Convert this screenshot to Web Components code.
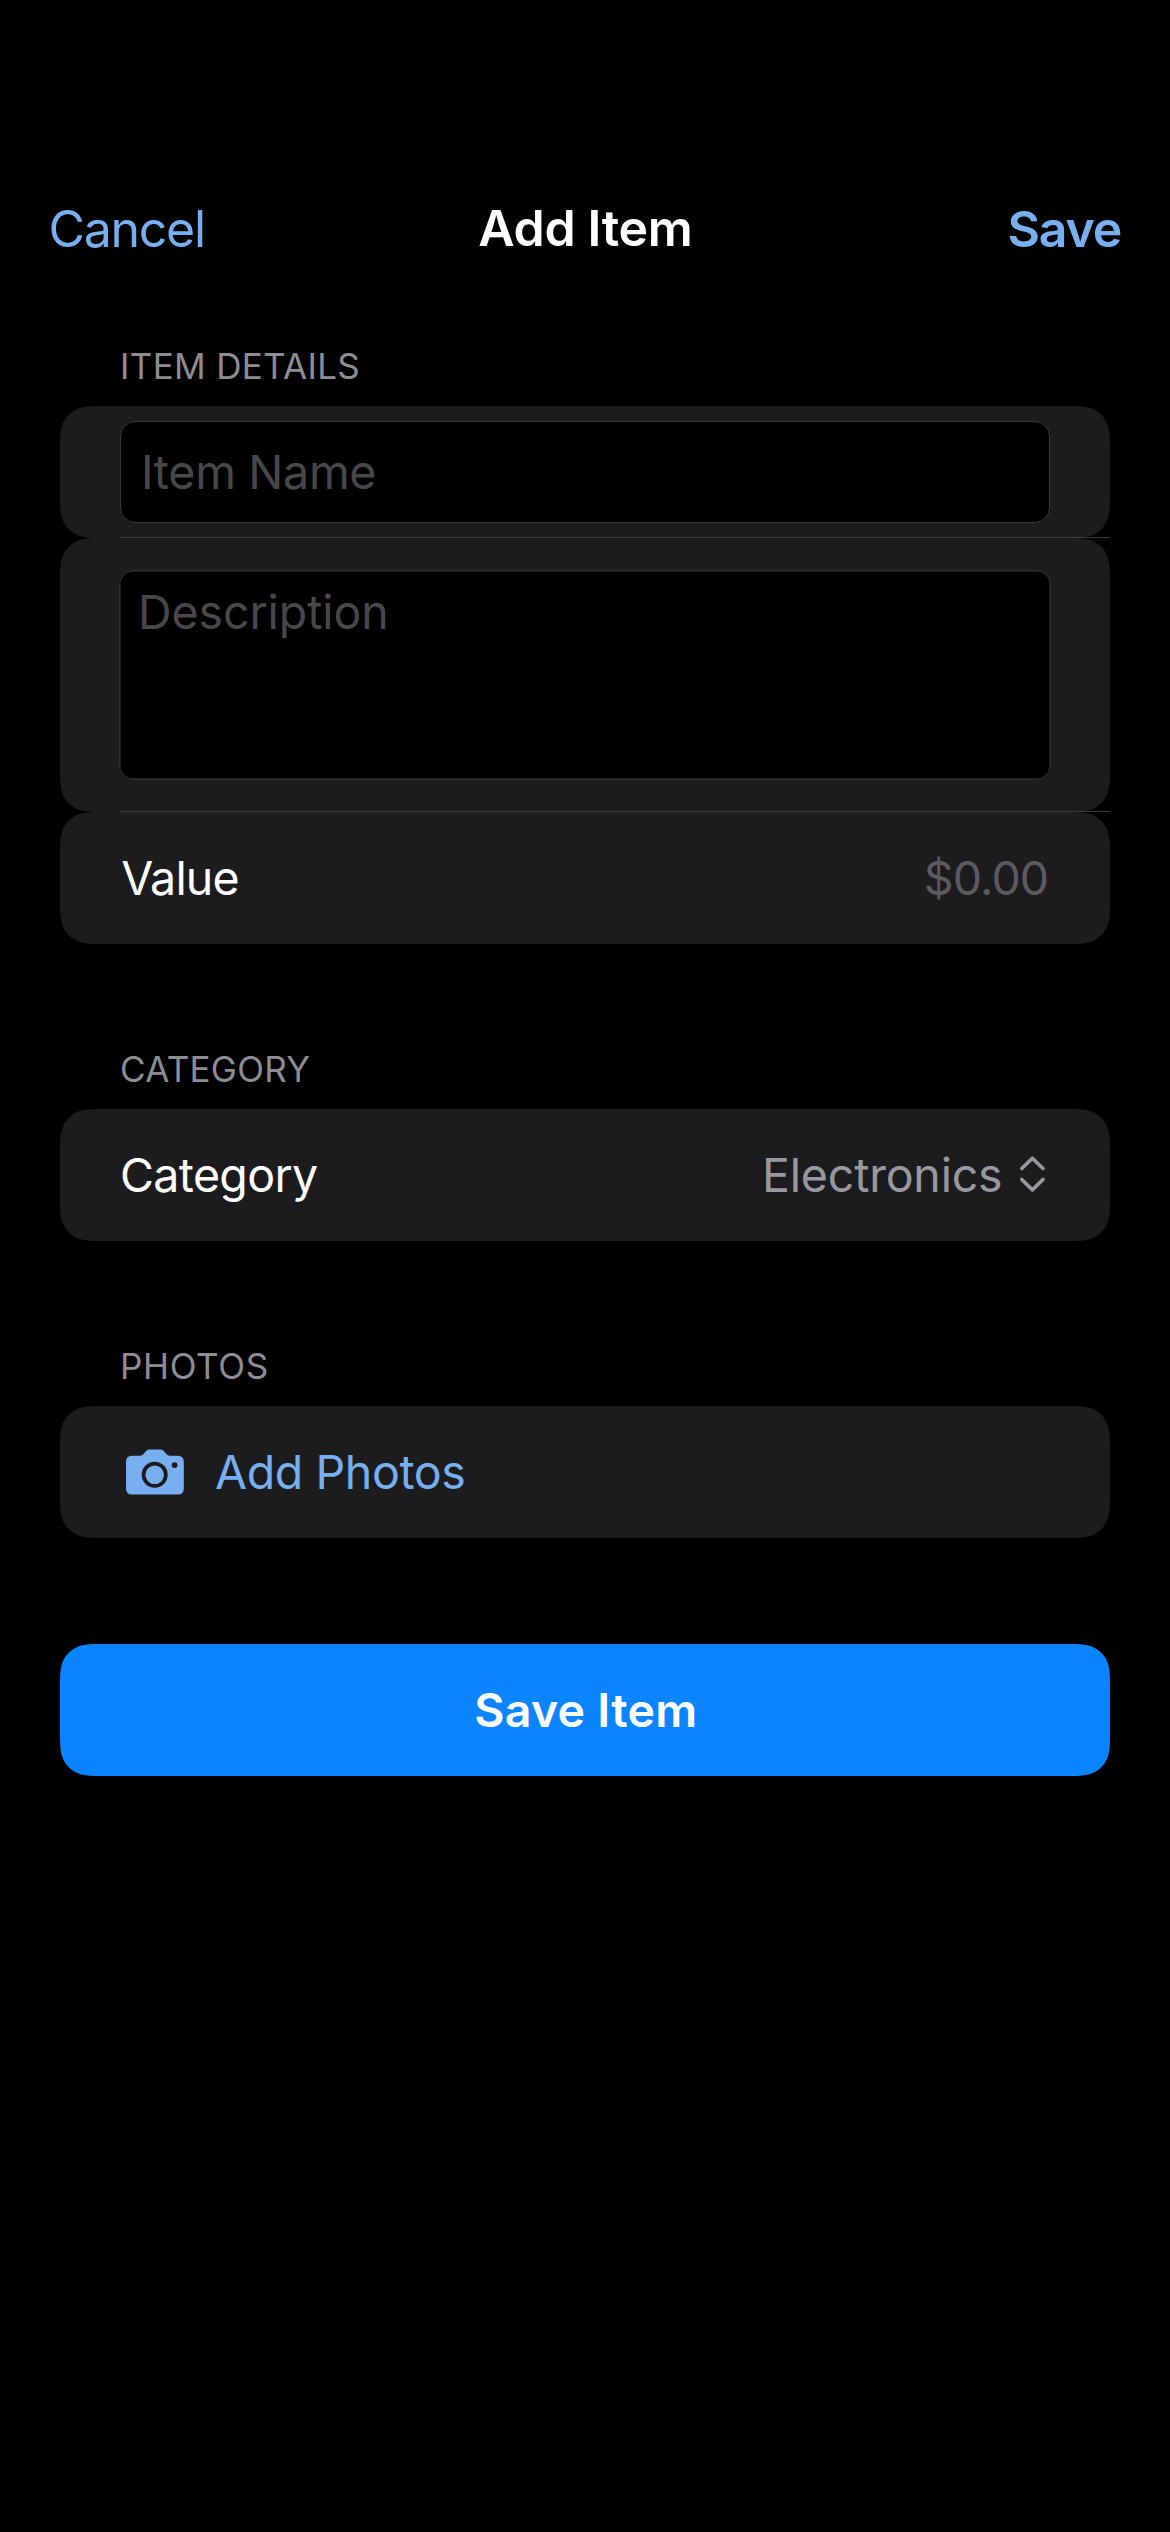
<!DOCTYPE html>
<html lang="en">
<head>
<meta charset="utf-8">
<title>Add Item</title>
<style>
html, body { margin: 0; background: #000; }
body { font-family: Inter, "Liberation Sans", sans-serif; color: #fff; }
</style>
</head>
<body>
<add-item-screen></add-item-screen>

<script>
const define = (name, html, setup) => {
  const template = document.createElement('template');
  template.innerHTML = html;
  customElements.define(name, class extends HTMLElement {
    connectedCallback() {
      if (this.shadowRoot) return;
      this.attachShadow({ mode: 'open' }).append(template.content.cloneNode(true));
      if (setup) setup(this, this.shadowRoot);
    }
  });
};

// Outline of a rectangle whose corners ease into the sides (continuous corners).
function continuousRect(w, h, r) {
  const a = 1.528665 * r, b = 1.088493 * r, c = 0.868407 * r, d = 0.631494 * r,
        e = 0.372824 * r, f = 0.16906 * r, g = 0.074911 * r;
  return `M${a} 0 H${w - a} C${w - b} 0 ${w - c} 0 ${w - d} ${g} C${w - e} ${f} ${w - f} ${e} ${w - g} ${d} C${w} ${c} ${w} ${b} ${w} ${a}
    V${h - a} C${w} ${h - b} ${w} ${h - c} ${w - g} ${h - d} C${w - f} ${h - e} ${w - e} ${h - f} ${w - d} ${h - g} C${w - c} ${h} ${w - b} ${h} ${w - a} ${h}
    H${a} C${b} ${h} ${c} ${h} ${d} ${h - g} C${e} ${h - f} ${f} ${h - e} ${g} ${h - d} C0 ${h - c} 0 ${h - b} 0 ${h - a}
    V${a} C0 ${b} 0 ${c} ${g} ${d} C${f} ${e} ${e} ${f} ${d} ${g} C${c} 0 ${b} 0 ${a} 0 Z`;
}

define('nav-bar', `
<style>
:host { display: grid; grid-template-columns: 1fr auto 1fr; align-items: center; height: 138px; padding: 160px 48.8px 0 48.6px;
  font-size: 50px; line-height: 60px; white-space: nowrap; }
.back, .done { color: #77aff0; }
.back { letter-spacing: -1.31px; }
.title { font-weight: 600; letter-spacing: -.35px; padding: 0 0 2px 1px; }
.done { font-weight: 600; letter-spacing: -1.17px; justify-self: end; }
</style>
<span class="back"><slot name="back"></slot></span>
<span class="title"><slot></slot></span>
<span class="done"><slot name="done"></slot></span>`);

define('form-section', `
<style>
:host { display: block; padding: 0 60px; }
header { box-sizing: border-box; height: 62px; padding-left: 60px; font-size: 35px; line-height: 44px; color: #8d8d93;
  letter-spacing: var(--label-spacing, .33px); }
.rows { display: flex; flex-direction: column; }
</style>
<header><slot name="label"></slot></header>
<div class="rows"><slot></slot></div>`);

define('form-row', `
<style>
:host { display: block; position: relative; }
.card { box-sizing: border-box; min-height: 132px; display: flex; align-items: center; justify-content: space-between;
  padding: var(--row-pad, 0 60px); background: var(--row-fill, #1c1c1e); border-radius: 30px;
  font-size: 46.5px; line-height: 56px; white-space: nowrap; }
:host([separator])::after { content: ""; position: absolute; left: 60px; right: 0; bottom: 0; height: 1px; background: #3a3a3c; }
</style>
<div class="card"><slot></slot></div>`, (host, root) => {
  const card = root.querySelector('.card');
  new ResizeObserver(() => {
    card.style.borderRadius = '0';
    card.style.clipPath = `path("${continuousRect(card.offsetWidth, card.offsetHeight, 30).replace(/\s+/g, ' ')}")`;
  }).observe(card);
});

define('text-field', `
<style>
:host { display: flex; align-items: center; box-sizing: border-box; width: 100%; height: 102px; padding: 0 20px;
  border: 1px solid #38383a; border-radius: 15px; background: #000; color: #48484a; letter-spacing: -.3px; }
</style>
<slot></slot>`);

define('text-area', `
<style>
:host { display: block; box-sizing: border-box; flex: 1; height: 210px; padding: 13px 18px; border: 1px solid #2e2e30;
  box-shadow: inset 0 0 0 1px #1c1c1d; border-radius: 14px; background: #000; color: #48484a; letter-spacing: -.08px; }
</style>
<slot></slot>`);

define('row-label', `
<style>:host { display: block; color: #fff; }</style>
<slot></slot>`);

define('amount-input', `
<style>:host { display: block; color: #5b5b5f; letter-spacing: -.88px; padding-right: 1.7px; }</style>
<slot></slot>`);

define('picker-value', `
<style>
:host { display: flex; align-items: center; gap: 15.6px; color: #98989f; letter-spacing: -.2px; }
svg { display: block; }
</style>
<slot></slot>
<svg width="32" height="40" viewBox="0 0 32 40" fill="none" stroke="currentColor" stroke-width="3.6" stroke-linecap="round" stroke-linejoin="round">
  <path d="M3.8 13.5 14.4 3.2 25 13.5M3.8 24.5 14.4 34.9 25 24.5"/>
</svg>`);

define('photo-button', `
<style>
:host { display: flex; align-items: center; gap: 31px; color: #77aff0; letter-spacing: -.39px; padding-left: 6px; }
svg { display: block; }
</style>
<svg width="58" height="46" viewBox="0 0 58 46" fill="currentColor" fill-rule="evenodd">
  <path d="M6 6.7H14C16 6.7 17 5.6 18.4 4L20 2.3C21.4 .8 22.6.6 24.5.6H33.5C35.4.6 36.6.8 38 2.3L39.6 4C41 5.6 42 6.7 44 6.7H51.8Q57.8 6.7 57.8 12.7V39.4Q57.8 45.4 51.8 45.4H6Q0 45.4 0 39.4V12.7Q0 6.7 6 6.7Z
    M28.7 12.8A13 13 0 1 0 28.7 38.8A13 13 0 1 0 28.7 12.8Z
    M48.6 13.2A2.9 2.9 0 1 0 48.6 19A2.9 2.9 0 1 0 48.6 13.2Z"/>
  <circle cx="28.7" cy="25.8" r="9.3"/>
</svg>
<slot></slot>`);

define('primary-button', `
<style>
:host { display: block; padding: 0 60px; --row-fill: #0a84ff; }
span { flex: 1; text-align: center; color: #fff; font-weight: 600; letter-spacing: .27px; padding-left: 1.5px; }
</style>
<form-row><span><slot></slot></span></form-row>`);

define('add-item-screen', `
<style>
:host { display: flex; flex-direction: column; box-sizing: border-box; width: 1170px; height: 2532px; background: #000; overflow: hidden; }
.form { display: flex; flex-direction: column; gap: 103px; padding-top: 46px; }
primary-button { margin-top: 3px; }
.name { --row-pad: 15px 60px; }
.description { --row-pad: 32px 59px; }
.category { --label-spacing: .29px; }
.photos { --label-spacing: .68px; }
.value-label { letter-spacing: -.82px; padding-left: 1.2px; }
.category-label { letter-spacing: -.65px; }
</style>
<nav-bar><span slot="back">Cancel</span>Add Item<span slot="done">Save</span></nav-bar>
<div class="form">
  <form-section>
    <span slot="label">ITEM DETAILS</span>
    <form-row class="name" separator><text-field>Item Name</text-field></form-row>
    <form-row class="description" separator><text-area>Description</text-area></form-row>
    <form-row><row-label class="value-label">Value</row-label><amount-input>$0.00</amount-input></form-row>
  </form-section>
  <form-section class="category">
    <span slot="label">CATEGORY</span>
    <form-row><row-label class="category-label">Category</row-label><picker-value>Electronics</picker-value></form-row>
  </form-section>
  <form-section class="photos">
    <span slot="label">PHOTOS</span>
    <form-row><photo-button>Add Photos</photo-button></form-row>
  </form-section>
  <primary-button>Save Item</primary-button>
</div>`);
</script>
</body>
</html>
